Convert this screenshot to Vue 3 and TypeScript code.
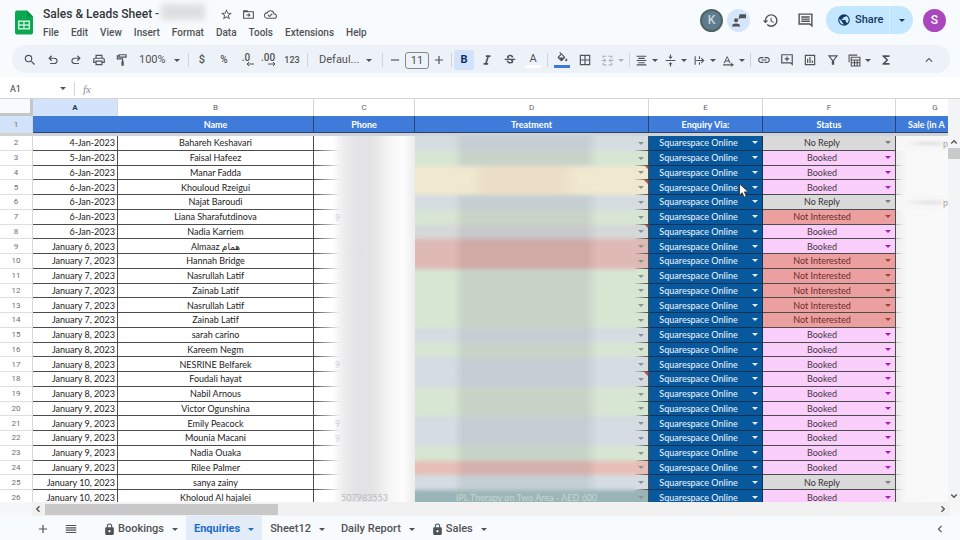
<script setup lang="ts">
import { ref } from 'vue'

type Status = 'Booked' | 'No Reply' | 'Not Interested'
interface Row {
  n: number
  date: string
  name: string
  status: Status
  tone: string
  note?: boolean
  phone?: string
  treatment?: string
  sale?: string
}

const icons: Record<string, string> = {
  search: 'M15.5 14h-.79l-.28-.27A6.47 6.47 0 0 0 16 9.5 6.5 6.5 0 1 0 9.5 16c1.61 0 3.09-.59 4.23-1.57l.27.28v.79l5 4.99L20.49 19l-4.99-5zm-6 0a4.5 4.5 0 1 1 0-9 4.5 4.5 0 0 1 0 9z',
  undo: 'M7 19v-2h7.1q1.575 0 2.737-1T18 13.500q0-1.500-1.163-2.500T14.100 10H7.800l2.600 2.600L9 14 4 9l5-5 1.400 1.400L7.800 8h6.300q2.425 0 4.163 1.575T20 13.500q0 2.350-1.738 3.925T14.100 19z',
  redo: 'M9.900 19q-2.425 0-4.163-1.575T4 13.500q0-2.350 1.737-3.925T9.900 8h6.300l-2.600-2.600L15 4l5 5-5 5-1.400-1.400 2.600-2.600H9.900q-1.575 0-2.737 1T6 13.500Q6 15 7.163 16T9.900 17H17v2z',
  print: 'M19 8h-1V3H6v5H5c-1.660 0-3 1.340-3 3v6h4v4h12v-4h4v-6c0-1.660-1.340-3-3-3zM8 5h8v3H8V5zm8 14H8v-4h8v4zm2-4v-2H6v2H4v-4c0-.55.45-1 1-1h14c.55 0 1 .45 1 1v4h-2z',
  paint: 'M18 2H6v2H3v7h9v3h-1v8h4v-8h-1V9H5V6h1v2h14V2zM8 4h10v2H8z',
  italic: 'M10 4v3h2.210l-3.420 10H6v3h8v-3h-2.210l3.420-10H18V4z',
  strike: 'M7.240 8.750c-.26-.48-.39-1.030-.39-1.670 0-.61.13-1.160.4-1.670.26-.5.63-.93 1.110-1.290.48-.35 1.050-.63 1.700-.83.66-.19 1.390-.29 2.180-.29.81 0 1.540.11 2.210.34.66.22 1.230.54 1.690.94.47.4.830.880 1.080 1.430s.38 1.150.38 1.810h-3.010c0-.31-.05-.59-.15-.85-.09-.27-.24-.49-.44-.68-.2-.19-.45-.33-.75-.44-.3-.1-.66-.16-1.060-.16-.39 0-.74.04-1.030.13s-.53.21-.72.36c-.19.16-.34.34-.44.55-.1.21-.15.43-.15.66 0 .48.25.88.74 1.210.38.25.77.48 1.410.7H7.390c-.05-.08-.11-.17-.15-.25zM21 12v-2H3v2h9.620c.18.07.4.14.55.2.37.17.66.34.87.51s.35.36.43.57c.07.2.11.43.11.69 0 .23-.05.45-.14.66-.09.2-.23.38-.42.53-.19.15-.42.26-.71.35-.29.08-.63.130-1.010.130-.43 0-.83-.04-1.180-.13s-.66-.23-.91-.42c-.25-.19-.45-.44-.59-.75s-.25-.76-.25-1.210H6.400c0 .55.08 1.130.24 1.580s.37.850.650 1.210c.28.35.6.66.98.920.37.26.78.48 1.220.65.44.17.9.3 1.380.39.48.08.96.13 1.440.13.8 0 1.530-.09 2.180-.28s1.210-.45 1.670-.79c.46-.34.82-.77 1.070-1.270s.38-1.070.38-1.710c0-.6-.1-1.140-.31-1.610-.05-.11-.11-.23-.17-.33H21z',
  fill: 'M16.560 8.940L7.620 0 6.210 1.410l2.380 2.380-5.150 5.150c-.59.59-.59 1.540 0 2.120l5.500 5.500c.29.29.68.44 1.060.44s.77-.15 1.060-.44l5.500-5.500c.59-.58.59-1.530 0-2.120zM5.210 10L10 5.210 14.790 10H5.210zM19 11.500s-2 2.170-2 3.500c0 1.100.9 2 2 2s2-.9 2-2c0-1.330-2-3.500-2-3.500z',
  borders: 'M3 3v18h18V3H3zm8 16H5v-6h6v6zm0-8H5V5h6v6zm8 8h-6v-6h6v6zm0-8h-6V5h6v6z',
  merge: 'M3 3h7v2H5v3H3zm11 0h7v5h-2V5h-5zM3 16h2v3h5v2H3zm16 0h2v5h-7v-2h5zM1 11h5V8l4 4-4 4v-3H1zm22 0v2h-5v3l-4-4 4-4v3z',
  align: 'M3 3h18v2H3zm3 4h12v2H6zm-3 4h18v2H3zm3 4h12v2H6zm-3 4h18v2H3z',
  valign: 'M8 19h3v4h2v-4h3l-4-4zM16 5h-3V1h-2v4H8l4 4zM3 11v2h18v-2z',
  wrap: 'M3 4h2v16H3zm8 0h2v5h-2zm0 11h2v5h-2zM6 11h11.200l-2.600-2.600L16 7l5 5-5 5-1.400-1.400 2.600-2.600H6z',
  rotate: 'M9 4L3 17h2.200l1.200-3h6.200l1.200 3H16L10 4zm.5 2.500L11.800 12H7.200zM2 19h15v-3l5 4-5 4v-3H2z',
  link: 'M3.900 12c0-1.710 1.390-3.100 3.100-3.100h4V7H7c-2.760 0-5 2.240-5 5s2.240 5 5 5h4v-1.900H7c-1.710 0-3.100-1.390-3.100-3.100zM8 13h8v-2H8v2zm9-6h-4v1.900h4c1.710 0 3.100 1.390 3.100 3.100s-1.390 3.100-3.100 3.100h-4V17h4c2.760 0 5-2.240 5-5s-2.240-5-5-5z',
  addComment: 'M22 2H2v16h16l4 4V2zm-2 2v13.200L18.800 16H4V4zm-9 2h2v3h3v2h-3v3h-2v-3H8V9h3z',
  chart: 'M3 3v18h18V3zm2 2h14v14H5zm2 5h2v7H7zm4-3h2v10h-2zm4 6h2v4h-2z',
  filter: 'M3 4h18l-7 9v7h-4v-7zm4.100 2l4.900 6.300L16.900 6z',
  table: 'M1 1h16v2H3v12H1zm4 4h18v18H5zm2 2v3h14V7zm0 5v3h4v-3zm6 0v3h3v-3zm5 0v3h3v-3zM7 17v4h4v-4zm6 0v4h3v-4zm5 0v4h3v-4z',
  sigma: 'M18 4H6v2l6.500 6L6 18v2h12v-3h-7l5-5-5-5h7z',
  star: 'M22 9.240l-7.190-.62L12 2 9.190 8.630 2 9.240l5.460 4.730L5.820 21 12 17.270 18.180 21l-1.630-7.030L22 9.240zM12 15.400l-3.760 2.270 1-4.280-3.320-2.880 4.380-.38L12 6.100l1.710 4.040 4.380.38-3.320 2.880 1 4.280L12 15.400z',
  move: 'M22 6H12l-2-2H2v16h20zm-2 12H4V8h16zm-8-1l4-4-4-4v3H8v2h4z',
  cloud: 'M19.350 10.040A7.490 7.490 0 0 0 12 4C9.110 4 6.600 5.640 5.350 8.040A5.994 5.994 0 0 0 0 14c0 3.310 2.690 6 6 6h13c2.760 0 5-2.240 5-5 0-2.640-2.050-4.780-4.650-4.960zM19 18H6a4 4 0 0 1-.4-8l1.050-.1.500-.95A5.500 5.500 0 0 1 17.400 10.400l.3 1.500 1.530.11A3 3 0 0 1 19 18zm-9-3.800l-2.100-2.100-1.400 1.400L10 17l6-6-1.400-1.400z',
  history: 'M13 3a9 9 0 0 0-9 9H1l3.890 3.890.07.14L9 12H6c0-3.870 3.130-7 7-7s7 3.130 7 7-3.130 7-7 7c-1.930 0-3.680-.79-4.940-2.060l-1.420 1.420A8.954 8.954 0 0 0 13 21a9 9 0 0 0 0-18zm-1 5v5l4.280 2.540.72-1.210-3.500-2.080V8H12z',
  comment: 'M22 2H2v16h16l4 4V2zm-2 2v13.200L18.800 16H4V4zM6 6h12v2H6zm0 3h12v2H6zm0 3h12v2H6z',
  globe: 'M12 2a10 10 0 1 0 0 20 10 10 0 0 0 0-20zm-1 17.930A7.990 7.990 0 0 1 4.210 10.210L9 15v1c0 1.100.9 2 2 2v1.930zm6.900-2.540c-.26-.81-1-1.390-1.900-1.390h-1v-3c0-.55-.45-1-1-1H8v-2h2c.55 0 1-.45 1-1V7h2c1.100 0 2-.9 2-2v-.41a7.990 7.990 0 0 1 2.900 12.800z',
  people: 'M7 9a3.500 3.500 0 1 0 0 7 3.500 3.500 0 0 0 0-7zM0 23c0-4 3-5 7-5s7 1 7 5zM13 2h11v7H14l-3 2z',
  plus: 'M19 13h-6v6h-2v-6H5v-2h6V5h2v6h6z',
  minus: 'M5 11h14v2H5z',
  menu: 'M3 5h18v2H3zm0 4h18v2H3zm0 4h18v2H3zm0 4h18v2H3z',
  lock: 'M18 8h-1V6A5 5 0 0 0 7 6v2H6a2 2 0 0 0-2 2v10c0 1.100.9 2 2 2h12a2 2 0 0 0 2-2V10a2 2 0 0 0-2-2zm-6 9a2 2 0 1 1 0-4 2 2 0 0 1 0 4zM15.100 8H8.900V6a3.100 3.100 0 0 1 6.200 0z',
  up: 'M12 8l-6 6 1.410 1.410L12 10.830l4.590 4.580L18 14z',
  left: 'M15.410 7.410L14 6l-6 6 6 6 1.410-1.410L10.830 12z',
  right: 'M8.590 16.590L10 18l6-6-6-6-1.410 1.410L13.170 12z',
  down: 'M7.410 8.590L12 13.170l4.590-4.580L18 10l-6 6-6-6z',
}

const menus = ['File', 'Edit', 'View', 'Insert', 'Format', 'Data', 'Tools', 'Extensions', 'Help']
const history = [['search', 'Search the menus'], ['undo', 'Undo'], ['redo', 'Redo'], ['print', 'Print'], ['paint', 'Paint format']]
const splits = [['align', 'Horizontal align'], ['valign', 'Vertical align'], ['wrap', 'Text wrapping'], ['rotate', 'Text rotation']]
const inserts = [['link', 'Insert link'], ['addComment', 'Insert comment'], ['chart', 'Insert chart'], ['filter', 'Create a filter']]
const statuses: Status[] = ['Booked', 'No Reply', 'Not Interested']

const B: Status = 'Booked'
const N: Status = 'No Reply'
const X: Status = 'Not Interested'
const rows = ref<Row[]>([
  { n: 2, date: '4-Jan-2023', name: 'Bahareh Keshavari', status: N, tone: 'blue', sale: 'p' },
  { n: 3, date: '5-Jan-2023', name: 'Faisal Hafeez', status: B, tone: 'green' },
  { n: 4, date: '6-Jan-2023', name: 'Manar Fadda', status: B, tone: 'yellow', note: true },
  { n: 5, date: '6-Jan-2023', name: 'Khouloud Rzeigui', status: B, tone: 'yellow', note: true },
  { n: 6, date: '6-Jan-2023', name: 'Najat Baroudi', status: N, tone: 'blue', sale: 'p' },
  { n: 7, date: '6-Jan-2023', name: 'Liana Sharafutdinova', status: X, tone: 'green', phone: '9' },
  { n: 8, date: '6-Jan-2023', name: 'Nadia Karriem', status: B, tone: 'grey', note: true },
  { n: 9, date: 'January 6, 2023', name: 'Almaaz همام', status: B, tone: 'red' },
  { n: 10, date: 'January 7, 2023', name: 'Hannah Bridge', status: X, tone: 'red' },
  { n: 11, date: 'January 7, 2023', name: 'Nasrullah Latif', status: X, tone: 'green' },
  { n: 12, date: 'January 7, 2023', name: 'Zainab Latif', status: X, tone: 'green' },
  { n: 13, date: 'January 7, 2023', name: 'Nasrullah Latif', status: X, tone: 'green' },
  { n: 14, date: 'January 7, 2023', name: 'Zainab Latif', status: X, tone: 'green' },
  { n: 15, date: 'January 8, 2023', name: 'sarah carino', status: B, tone: 'blue' },
  { n: 16, date: 'January 8, 2023', name: 'Kareem Negm', status: B, tone: 'green' },
  { n: 17, date: 'January 8, 2023', name: 'NESRINE Belfarek', status: B, tone: 'blue', phone: '9' },
  { n: 18, date: 'January 8, 2023', name: 'Foudali hayat', status: B, tone: 'blue', note: true },
  { n: 19, date: 'January 8, 2023', name: 'Nabil Arnous', status: B, tone: 'green' },
  { n: 20, date: 'January 9, 2023', name: 'Victor Ogunshina', status: B, tone: 'green' },
  { n: 21, date: 'January 9, 2023', name: 'Emily Peacock', status: B, tone: 'blue', phone: '9' },
  { n: 22, date: 'January 9, 2023', name: 'Mounia Macani', status: B, tone: 'blue', phone: '9' },
  { n: 23, date: 'January 9, 2023', name: 'Nadia Ouaka', status: B, tone: 'green' },
  { n: 24, date: 'January 9, 2023', name: 'Rilee Palmer', status: B, tone: 'rose' },
  { n: 25, date: 'January 10, 2023', name: 'sanya zainy', status: N, tone: 'blue' },
  { n: 26, date: 'January 10, 2023', name: 'Kholoud Al hajalei', status: B, tone: 'teal', phone: '507983553', treatment: 'IPL Therapy on Two Area - AED 600' },
])

const tabs = [
  { name: 'Bookings', locked: true },
  { name: 'Enquiries' },
  { name: 'Sheet12' },
  { name: 'Daily Report' },
  { name: 'Sales', locked: true },
]
const activeTab = ref('Enquiries')
const fontSize = ref('11')
const cellRef = ref('A1')
const slug = (s: string) => s.toLowerCase().replace(' ', '-')
</script>

<template>
  <div class="app">
    <header class="top">
      <svg class="logo" viewBox="0 0 18 24" aria-hidden="true">
        <path d="M2 0h10l6 6v16a2 2 0 0 1-2 2H2a2 2 0 0 1-2-2V2a2 2 0 0 1 2-2z" fill="#0aa850" />
        <path d="M12 0l6 6h-6z" fill="#07933f" />
        <path d="M3 10h12v9H3zm1.500 1.500v2.200h3.700v-2.200zm5.200 0v2.200h3.800v-2.200zm-5.200 3.700v2.300h3.700v-2.300zm5.200 0v2.300h3.800v-2.300z" fill="#c9eed8" fill-rule="evenodd" />
      </svg>
      <div class="heading">
        <div class="title-row">
          <h1>Sales &amp; Leads Sheet -</h1>
          <span class="smudge"></span>
          <button v-for="i in ['star', 'move', 'cloud']" :key="i" class="title-btn" :aria-label="i">
            <svg class="ic" viewBox="0 0 24 24"><path :d="icons[i]" /></svg>
          </button>
        </div>
        <nav class="menus">
          <button v-for="m in menus" :key="m">{{ m }}</button>
        </nav>
      </div>
      <div class="account">
        <button class="avatar k" aria-label="K">K</button>
        <button class="avatar meet" aria-label="Viewers"><svg class="ic" viewBox="0 0 24 24"><path :d="icons.people" /></svg></button>
        <button class="head-btn" aria-label="Version history"><svg viewBox="0 0 24 24"><path :d="icons.history" /></svg></button>
        <button class="head-btn" aria-label="Comments"><svg viewBox="0 0 24 24"><path :d="icons.comment" /></svg></button>
        <div class="share">
          <button class="share-main"><svg class="ic" viewBox="0 0 24 24"><path :d="icons.globe" /></svg>Share</button>
          <button class="share-more" aria-label="Share options"><i class="tri"></i></button>
        </div>
        <button class="avatar s" aria-label="Account">S</button>
      </div>
    </header>

    <div class="toolbar" role="toolbar">
      <div class="group spaced">
        <button v-for="[i, label] in history" :key="i" class="tool" :aria-label="label"><svg class="ic" viewBox="0 0 24 24"><path :d="icons[i]" /></svg></button>
      </div>
      <label class="pick zoom"><select aria-label="Zoom"><option>100%</option></select><i class="tri"></i></label>
      <span class="sep"></span>
      <div class="group">
        <button class="tool strong">$</button>
        <button class="tool strong small">%</button>
        <button class="tool dec" aria-label="Decrease decimal places">.0<svg viewBox="0 0 10 6"><path d="M9 3H2M4 1L2 3l2 2" /></svg></button>
        <button class="tool dec" aria-label="Increase decimal places">.00<svg viewBox="0 0 10 6"><path d="M1 3h7M6 1l2 2-2 2" /></svg></button>
        <button class="tool num">123</button>
      </div>
      <span class="sep"></span>
      <label class="pick font"><select aria-label="Font"><option>Defaul...</option></select><i class="tri"></i></label>
      <span class="sep"></span>
      <div class="group">
        <button class="tool slim" aria-label="Decrease font size"><svg class="ic" viewBox="0 0 24 24"><path :d="icons.minus" /></svg></button>
        <input v-model="fontSize" class="size" aria-label="Font size" />
        <button class="tool slim" aria-label="Increase font size"><svg class="ic" viewBox="0 0 24 24"><path :d="icons.plus" /></svg></button>
      </div>
      <span class="sep"></span>
      <div class="group loose">
        <button class="tool slim on">B</button>
        <button class="tool slim" aria-label="Italic"><svg class="ic" viewBox="0 0 24 24"><path :d="icons.italic" /></svg></button>
        <button class="tool slim" aria-label="Strikethrough"><svg class="ic" viewBox="0 0 24 24"><path :d="icons.strike" /></svg></button>
        <button class="tool slim bar white">A</button>
      </div>
      <span class="sep wide"></span>
      <div class="group loose">
        <button class="tool slim bar blue" aria-label="Fill color"><svg class="ic" viewBox="0 0 24 24"><path :d="icons.fill" /></svg></button>
        <button class="tool slim" aria-label="Borders"><svg class="ic" viewBox="0 0 24 24"><path :d="icons.borders" /></svg></button>
        <button class="split dim" aria-label="Merge cells"><svg class="ic" viewBox="0 0 24 24"><path :d="icons.merge" /></svg><i class="tri"></i></button>
      </div>
      <span class="sep"></span>
      <div class="group">
        <button v-for="[i, label] in splits" :key="i" class="split" :aria-label="label"><svg class="ic" viewBox="0 0 24 24"><path :d="icons[i]" /></svg><i class="tri"></i></button>
      </div>
      <span class="sep"></span>
      <div class="group spaced">
        <button v-for="[i, label] in inserts" :key="i" class="tool" :aria-label="label"><svg class="ic" viewBox="0 0 24 24"><path :d="icons[i]" fill-rule="evenodd" /></svg></button>
        <button class="split" aria-label="Table views"><svg class="ic" viewBox="0 0 24 24"><path :d="icons.table" fill-rule="evenodd" /></svg><i class="tri"></i></button>
        <button class="tool" aria-label="Functions"><svg class="ic" viewBox="0 0 24 24"><path :d="icons.sigma" /></svg></button>
      </div>
      <button class="tool collapse" aria-label="Hide the menus"><svg class="ic" viewBox="0 0 24 24"><path :d="icons.up" /></svg></button>
    </div>

    <div class="formula">
      <input v-model="cellRef" class="cell-ref" aria-label="Name box" />
      <i class="tri"></i>
      <span class="sep"></span>
      <span class="fx">fx</span>
      <input class="fx-input" aria-label="Formula" />
    </div>

    <main class="sheet">
      <div class="viewport">
        <table>
          <colgroup>
            <col class="c-num" /><col class="c-a" /><col class="c-b" /><col class="c-c" /><col /><col class="c-e" /><col class="c-f" /><col class="c-g" />
          </colgroup>
          <thead>
            <tr class="letters">
              <th class="corner"></th>
              <th class="sel">A</th>
              <th v-for="l in 'BCDEFG'" :key="l">{{ l }}</th>
            </tr>
            <tr class="titles">
              <th class="idx sel">1</th>
              <th class="open"></th><th>Name</th><th>Phone</th><th>Treatment</th><th>Enquiry Via:</th><th>Status</th><th class="last">Sale (in A</th>
            </tr>
            <tr class="freeze"><td colspan="8"></td></tr>
          </thead>
          <tbody>
            <tr v-for="r in rows" :key="r.n">
              <th class="idx">{{ r.n }}</th>
              <td class="date">{{ r.date }}</td>
              <td class="name">{{ r.name }}</td>
              <td class="phone" :class="{ partial: r.phone === '9' }">{{ r.phone }}</td>
              <td class="treatment" :class="r.tone">
                <div class="wrap"><span class="faint">{{ r.treatment }}</span><i class="tri"></i><i v-if="r.note" class="note"></i></div>
              </td>
              <td class="via">
                <label class="wrap"><select :aria-label="'Enquiry via, row ' + r.n"><option>Squarespace Online</option></select><i class="tri"></i></label>
              </td>
              <td class="status" :class="slug(r.status)">
                <label class="wrap">
                  <select v-model="r.status" :aria-label="'Status, row ' + r.n"><option v-for="s in statuses" :key="s">{{ s }}</option></select><i class="tri"></i>
                </label>
              </td>
              <td class="sale" :class="{ smeared: r.sale }"><span>{{ r.sale }}</span></td>
            </tr>
          </tbody>
        </table>
        <div class="veil"></div>
        <svg class="pointer" viewBox="0 0 12 18" aria-hidden="true"><path d="M1 1v13l3-3 2 5 2.500-1-2-5H11z" fill="#fff" stroke="#333" /></svg>
      </div>
      <div class="vbar">
        <button aria-label="Scroll up"><svg viewBox="0 0 24 24"><path :d="icons.up" /></svg></button>
        <span class="vthumb"></span>
        <button class="end" aria-label="Scroll down"><svg viewBox="0 0 24 24"><path :d="icons.down" /></svg></button>
      </div>
    </main>

    <div class="hbar">
      <div class="htrack">
        <button aria-label="Scroll left"><svg viewBox="0 0 24 24"><path :d="icons.left" /></svg></button>
        <span class="hthumb"></span>
        <button class="end" aria-label="Scroll right"><svg viewBox="0 0 24 24"><path :d="icons.right" /></svg></button>
      </div>
    </div>

    <footer class="tabs">
      <button class="tab-ic" aria-label="Add sheet"><svg class="ic" viewBox="0 0 24 24"><path :d="icons.plus" /></svg></button>
      <button class="tab-ic" aria-label="All sheets"><svg class="ic" viewBox="0 0 24 24"><path :d="icons.menu" /></svg></button>
      <div class="tab-list">
        <button v-for="t in tabs" :key="t.name" class="tab" :class="{ active: t.name === activeTab }" @click="activeTab = t.name">
          <svg v-if="t.locked" class="lock" viewBox="0 0 24 24"><path :d="icons.lock" fill-rule="evenodd" /></svg>
          <span>{{ t.name }}</span><i class="tri"></i>
        </button>
      </div>
      <button class="panel" aria-label="Show side panel"><svg class="ic" viewBox="0 0 24 24"><path :d="icons.left" /></svg></button>
    </footer>
  </div>
</template>

<style>
html,
body {
  margin: 0;
  background: #f8fbfd;
}
</style>

<style scoped>
.app {
  display: flex;
  flex-direction: column;
  height: 100vh;
  overflow: hidden;
  background: #f8fbfd;
  color: #505355;
  font: 11px/14px Roboto, 'Liberation Sans', sans-serif;
}
button,
input,
select {
  margin: 0;
  padding: 0;
  border: 0;
  border-radius: 0;
  outline: 0;
  background: none;
  color: inherit;
  font: inherit;
  appearance: none;
}
svg {
  display: block;
  flex: none;
  fill: currentColor;
}
.ic {
  width: 14px;
  height: 14px;
}
.tri {
  flex: none;
  width: 0;
  height: 0;
  border: 3px solid transparent;
  border-top-color: currentColor;
  border-bottom: 0;
}

.top {
  display: flex;
  flex: none;
  height: 45px;
  box-sizing: border-box;
  padding: 5px 14px 0 15px;
}
.logo {
  width: 18px;
  height: 25px;
  margin-top: 5px;
}
.heading {
  margin-left: 10px;
}
.title-row {
  display: flex;
  align-items: center;
  height: 19px;
}
h1 {
  margin: 0;
  color: #34373a;
  font-size: 12px;
  font-weight: 500;
  line-height: 19px;
  white-space: nowrap;
}
.smudge {
  width: 44px;
  height: 16px;
  margin: 0 10px 6px 2px;
  background: #dcdfe0;
  filter: blur(3px);
}
.title-btn {
  display: grid;
  place-items: center;
  width: 22px;
  height: 19px;
}
.title-btn .ic {
  width: 13px;
  height: 13px;
}
.menus {
  display: flex;
  gap: 12px;
  font-size: 10px;
  font-weight: 500;
}
.menus button {
  height: 17px;
  line-height: 17px;
}
.account {
  display: flex;
  align-items: center;
  height: 30px;
  margin-left: auto;
}
.avatar {
  display: grid;
  place-items: center;
  box-sizing: border-box;
  width: 23px;
  height: 23px;
  border-radius: 50%;
  color: #fff;
  font-size: 12px;
  font-weight: 500;
}
.avatar.k {
  border: 2px solid #4f6361;
  background: #5e7c8c;
  color: #c8d7dd;
}
.avatar.meet {
  margin: 0 3px 0 4px;
  background: #d5e5fb;
  color: #505355;
}
.avatar.s {
  margin-left: 10px;
  background: #ab47bc;
}
.head-btn {
  display: grid;
  place-items: center;
  width: 35px;
  height: 30px;
}
.head-btn svg {
  width: 17px;
  height: 17px;
}
.share {
  display: flex;
  height: 28px;
  margin-left: 3px;
  overflow: hidden;
  border-radius: 14px;
  background: #c2e7ff;
  color: #123a66;
}
.share-main {
  display: flex;
  align-items: center;
  gap: 4px;
  width: 63px;
  padding-left: 11px;
  font-weight: 500;
}
.share-more {
  display: grid;
  place-items: center;
  width: 24px;
  border-left: 1px solid #d8effe;
}

.toolbar {
  display: flex;
  flex: none;
  align-items: center;
  box-sizing: border-box;
  height: 28px;
  margin: 0 10px 4px 12px;
  padding: 2px 10px 0 7px;
  border-radius: 14px;
  background: #edf2f8;
}
.group {
  display: flex;
  align-items: center;
}
.group.spaced {
  gap: 1px;
}
.group.loose {
  gap: 3px;
}
.tool {
  display: grid;
  place-items: center;
  width: 22px;
  height: 20px;
}
.tool.slim {
  width: 20px;
}
.tool.strong {
  font-weight: 500;
}
.tool.small {
  font-size: 10px;
}
.tool.num {
  width: 26px;
  font-size: 9px;
  font-weight: 500;
}
.tool.dec {
  align-content: center;
  font-size: 10px;
  font-weight: 500;
  line-height: 10px;
}
.tool.dec svg {
  width: 10px;
  height: 6px;
  margin: -2px 0 0 8px;
  fill: none;
  stroke: currentColor;
}
.tool.on {
  border-radius: 2px;
  background: #d3e3fd;
  color: #0b2f66;
  font-weight: 700;
}
.tool.bar {
  align-content: center;
  line-height: 12px;
}
.tool.bar .ic {
  width: 13px;
  height: 13px;
}
.tool.bar::after {
  width: 16px;
  height: 3px;
  background: #fff;
  content: '';
}
.tool.bar.blue::after {
  background: #3c78d8;
}
.sep {
  flex: none;
  width: 1px;
  height: 14px;
  margin: 0 2px;
  background: #d0d4d8;
}
.sep.wide {
  margin: 0 4px;
}
.pick {
  display: flex;
  align-items: center;
}
.pick select {
  flex: 1;
  min-width: 0;
}
.pick.zoom {
  width: 41px;
  padding: 0 6px;
}
.pick.font {
  width: 53px;
  padding: 0 8px 0 9px;
}
.size {
  width: 24px;
  height: 17px;
  box-sizing: border-box;
  border: 1px solid #85888a;
  border-radius: 3px;
  text-align: center;
}
.split {
  display: flex;
  align-items: center;
  gap: 4px;
  width: 29px;
  height: 20px;
  padding-left: 3px;
}
.split.dim {
  color: #afb3b6;
}
.split .ic {
  width: 13px;
  height: 13px;
}
.collapse {
  margin-left: auto;
}

.formula {
  display: flex;
  flex: none;
  align-items: center;
  box-sizing: border-box;
  height: 22px;
  padding: 2px 0 0 10px;
  border-bottom: 1px solid #d3d5d7;
  background: #fff;
}
.cell-ref {
  width: 50px;
  color: #333;
  font-size: 9px;
}
.formula .sep {
  margin: 0 8px;
}
.fx {
  color: #8a8d90;
  font: italic 11px/14px 'Liberation Serif', serif;
}
.fx-input {
  flex: 1;
}

.sheet {
  display: flex;
  flex: 1;
  min-height: 0;
}
.viewport {
  position: relative;
  flex: 1;
  min-width: 0;
  overflow: hidden;
  background: #fff;
}
table {
  width: calc(100% + 27px);
  height: calc(100% + 3px);
  table-layout: fixed;
  border-spacing: 0;
  font: 9px/11px Lato, 'DejaVu Sans', sans-serif;
}
th,
td {
  box-sizing: border-box;
  padding: 0;
  overflow: hidden;
  white-space: nowrap;
}
.c-num { width: 33px; }
.c-a { width: 85px; }
.c-b { width: 196px; }
.c-c { width: 101px; }
.c-e { width: 114px; }
.c-f { width: 133px; }
.c-g { width: 79px; }
.letters th {
  height: 17px;
  border-right: 1px solid #d5d7d9;
  color: #606366;
  font: 8px/14px Roboto, 'Liberation Sans', sans-serif;
}
.letters .corner {
  border-right: 3px solid #c4c6c8;
  border-bottom: 3px solid #c4c6c8;
  background: #f9fafb;
}
.letters .sel,
.titles .sel {
  background: #d3e3fb;
  color: #1f3a5f;
  font-weight: 700;
}
.titles th {
  height: 17px;
  border-right: 1px solid #27446f;
  border-bottom: 1px solid #27446f;
  background: #3f7bd9;
  color: #fff;
  font-weight: 700;
}
.titles .open {
  border-right-color: #3f7bd9;
}
.titles .last {
  padding-left: 12px;
  text-align: left;
}
.freeze td {
  height: 3px;
  background: #cfd3d5;
}
.idx,
.titles .idx {
  border-right: 1px solid #d5d7d9;
  border-bottom: 1px solid #dcdee0;
  color: #6c6f72;
  font: 8px/11px Roboto, 'Liberation Sans', sans-serif;
}
tbody td {
  border-right: 1px solid #4c4c4c;
  border-bottom: 1px solid #4c4c4c;
  color: #222;
  text-align: center;
}
tbody .date {
  padding-right: 2px;
  text-align: right;
}
tbody .phone {
  border: 0;
  background:
    linear-gradient(to right, #4c4c4c, transparent 26%) bottom / 100% 1px no-repeat,
    linear-gradient(to right, #fff 18%, #ececed 30%, #e3e3e5 42%, #e4e4e5 58%, #f5f5f6 74%, #fdfdfd 88%, #ececec);
  color: #b9b9bc;
}
tbody .partial {
  padding-left: 21px;
  color: #d0d0d2;
  text-align: left;
}
tbody .treatment {
  --edge: #d5dce2;
  --mid: #c5cfd3;
  border-bottom: 0;
  background:
    linear-gradient(to right, transparent 94%, #4c4c4c) bottom / 100% 1px no-repeat,
    linear-gradient(to right, var(--edge) 17%, var(--mid) 20%, var(--mid) 74%, var(--edge) 78%);
  color: #8b9396;
}
.treatment.green {
  --edge: #d7e5d3;
  --mid: #c9d4c8;
}
tbody .treatment.yellow {
  --edge: #f0e8cf;
  --mid: #ecdec6;
  background:
    linear-gradient(to right, transparent 94%, #4c4c4c) bottom / 100% 1px no-repeat,
    linear-gradient(to right, var(--edge) 24%, var(--mid) 30%, var(--mid) 62%, var(--edge) 70%);
}
.treatment.grey {
  --edge: #d4d8d8;
  --mid: #c7c9cb;
}
.treatment.red {
  --edge: #dfb9b4;
  --mid: #d1aaa6;
}
.treatment.rose {
  --edge: #e8bfb8;
  --mid: #d6b0ad;
}
.treatment.teal {
  --edge: #98b4b7;
  --mid: #9cb6b6;
}
.treatment .faint {
  flex: 1;
  color: #c5d5d5;
}
.wrap {
  display: flex;
  position: relative;
  align-items: center;
  height: 11px;
  padding-right: 4px;
}
.note {
  position: absolute;
  top: -2px;
  right: 0;
  border: 2px solid transparent;
  border-top-color: #cc4b43;
  border-right-color: #cc4b43;
}
.wrap select {
  flex: 1;
  min-width: 0;
  height: 11px;
  padding-right: 4px;
  text-align: center;
  text-align-last: center;
}
tbody .via {
  border-color: #123253;
  background: #07589c;
  color: #e4eef7;
  font-weight: 500;
}
tbody .status {
  background: #fbcffb;
  color: #443644;
}
.status .tri {
  color: #a020b4;
}
tbody .no-reply {
  background: #dadada;
  color: #333;
}
.no-reply .tri {
  color: #7b7b7b;
}
tbody .not-interested {
  background: #eb9f9f;
  color: #6e2c2c;
}
.not-interested .tri {
  color: #9c4040;
}
tbody .sale {
  border: 0;
  background:
    linear-gradient(to right, #bbb, transparent 10%) bottom / 100% 1px no-repeat,
    linear-gradient(to right, #ececec, #f8f8f8 12%, #fafafa);
  color: #aaa;
}
.sale span {
  padding-left: 20px;
}
tbody .smeared {
  background: radial-gradient(ellipse at 42% 50%, #e4e4e4, #f7f7f7 40%);
}
.veil {
  position: absolute;
  top: 36px;
  right: 312px;
  bottom: 8px;
  left: 415px;
  backdrop-filter: blur(2px);
}
.pointer {
  position: absolute;
  top: 84px;
  left: 738px;
  width: 12px;
  height: 16px;
}

.vbar {
  display: flex;
  flex: none;
  flex-direction: column;
  width: 12px;
  padding-top: 36px;
  background: #f3f4f5;
}
.vbar button {
  height: 13px;
}
.vbar svg,
.htrack svg {
  width: 12px;
  height: 12px;
  stroke: currentColor;
}
.vthumb {
  height: 11px;
  background: #c8c9ca;
}
.vbar .end {
  margin-top: auto;
}
.hbar {
  display: flex;
  flex: none;
  height: 14px;
  padding: 0 10px 0 32px;
  background: #f6f7f8;
}
.htrack {
  display: flex;
  flex: 1;
  align-items: center;
  background: #f1f1f1;
}
.htrack button {
  width: 13px;
}
.hthumb {
  width: 233px;
  height: 11px;
  background: #c8c8c8;
}
.htrack .end {
  margin-left: auto;
}

.tabs {
  display: flex;
  flex: none;
  align-items: center;
  height: 24px;
  padding: 0 13px 0 29px;
  background: #f8fbfd;
}
.tab-ic {
  display: grid;
  place-items: center;
  width: 28px;
  height: 24px;
  padding-top: 2px;
}
.tab-list {
  display: flex;
  margin-left: 10px;
}
.tab {
  display: flex;
  align-items: center;
  height: 24px;
  padding: 2px 8px 0;
  font-weight: 500;
}
.tab .tri {
  margin-left: 8px;
}
.lock {
  width: 13px;
  height: 13px;
  margin-right: 2px;
}
.tab.active {
  background: #e1ecf8;
  color: #1f6cc5;
  font-weight: 700;
}
.panel {
  margin-left: auto;
  padding-top: 2px;
}
</style>
